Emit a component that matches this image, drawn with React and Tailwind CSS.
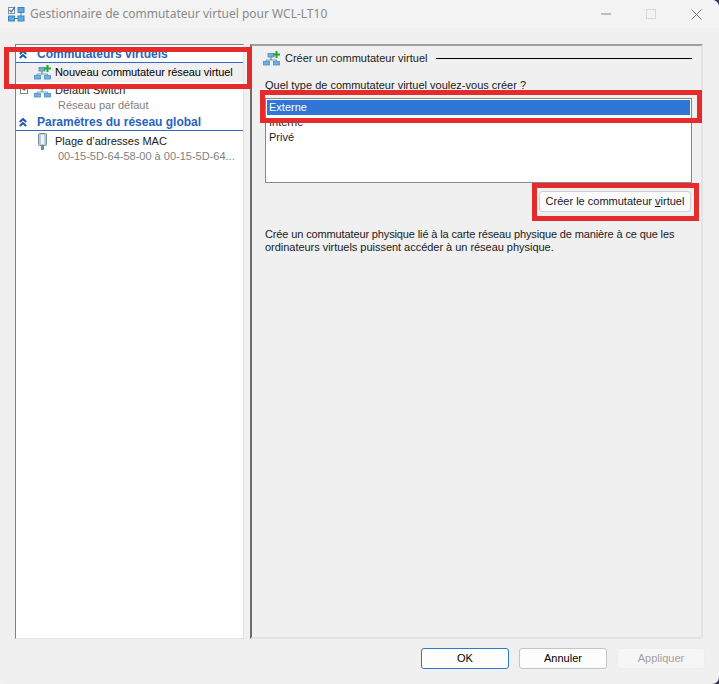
const font = { fontFamily: '"Liberation Sans", Arial, sans-serif' };

function SwitchIcon({ plus = false, className = '' }) {
  return (
    <svg width="17" height="15" viewBox="0 0 17 15" className={`shrink-0 ${className}`}>
      <path d="M8 5v4" fill="none" stroke="#7fb069" strokeWidth="1.5" />
      <path d="M3 10.5V9h10.5v1.5" fill="none" stroke="#6f9fc0" strokeWidth="1" />
      <rect x="5" y="2.5" width="6" height="3.5" fill="#6fb0dc" stroke="#4a90c4" strokeWidth="0.8" />
      <rect x="0.5" y="10.5" width="6" height="3.5" fill="#6fb0dc" stroke="#4a90c4" strokeWidth="0.8" />
      <rect x="10.5" y="10.5" width="6" height="3.5" fill="#6fb0dc" stroke="#4a90c4" strokeWidth="0.8" />
      {plus && <path d="M10 2.5h2.5V0h2v2.5H17v2h-2.5V7h-2V4.500H10z" fill="#22a82c" />}
    </svg>
  );
}

function ChevronUp() {
  return (
    <svg width="8" height="9" viewBox="0 0 8 9" className="shrink-0">
      <path d="M.8 4 4 1l3.200 3M.8 8 4 5l3.200 3" fill="none" stroke="#1c55b0" strokeWidth="2" />
    </svg>
  );
}

function SectionHeader({ children }) {
  return (
    <div className="flex h-[18px] items-center gap-[10px] border-b border-[#2f6bc4] pl-[3px] pt-px">
      <ChevronUp />
      <span className="whitespace-nowrap text-[12px] font-bold text-[#2a63bd]">{children}</span>
    </div>
  );
}

function Highlight({ className }) {
  return <div className={`absolute border-[5px] border-[#e32c2b] ${className}`} />;
}

function FooterButton({ children, variant = 'normal' }) {
  const styles = {
    primary: 'border-[#2f78cf] bg-[#fdfdfd] text-black',
    normal: 'border-[#c4c4c4] bg-[#fdfdfd] text-black',
    disabled: 'border-[#eeeeee] bg-[#f6f6f6] text-[#a0a0a0]',
  };
  return (
    <button className={`h-[21px] w-[88px] rounded-[3px] border text-[11px] leading-none ${styles[variant]}`}>
      {children}
    </button>
  );
}

export default function App() {
  return (
    <div className="h-[684px] w-[719px] bg-gradient-to-r from-[#f4f4f4] from-90% to-[#3a2f55] to-90%">
      <div style={font} className="relative flex h-[684px] w-[719px] flex-col overflow-hidden rounded-[7px] bg-[#f0f0f0] text-[11px] text-[#1a1a1a]">
        <div className="flex h-[28px] shrink-0 items-center bg-[#f3f3f3] pl-2">
          <svg width="17" height="16" viewBox="0 0 17 16" className="shrink-0">
            <rect x="0.5" y="1.500" width="6" height="6" fill="#fff" stroke="#8a8a8a" />
            <path d="M1.500 4 3.200 6 7 .8" fill="none" stroke="#2f78cf" strokeWidth="1.300" />
            <rect x="0.500" y="10" width="6" height="5" fill="#5fa8e0" stroke="#3d85c0" />
            <rect x="10" y="1.500" width="6" height="5" fill="#5fa8e0" stroke="#3d85c0" />
            <rect x="10" y="10" width="6" height="5" fill="#5fa8e0" stroke="#3d85c0" />
            <path d="M13 6.500v3.500M6.500 12.500H10" stroke="#3d85c0" />
          </svg>
          <span className="ml-[5px] whitespace-nowrap font-['Noto_Sans'] text-[12px] text-[#8a8a8a]">Gestionnaire de commutateur virtuel pour WCL-LT10</span>
          <div className="ml-auto flex items-center">
            <svg width="10" height="10" viewBox="0 0 10 10" className="mr-[35px]">
              <path d="M0 5h10" stroke="#888" />
            </svg>
            <svg width="10" height="10" viewBox="0 0 10 10" className="mr-[35px]">
              <rect x="0.5" y="0.5" width="9" height="9" fill="none" stroke="#d8d8d8" />
            </svg>
            <svg width="11" height="11" viewBox="0 0 11 11" className="mr-[17px]">
              <path d="M0.5 0.5l10 10M10.5 0.5l-10 10" stroke="#777" />
            </svg>
          </div>
        </div>

        <div className="flex flex-1 gap-[6px] pl-[15px] pr-[16px] pt-[16px]">
          <div className="flex h-[595px] w-[229px] flex-col border border-[#808080] border-b-[#e3e3e3] border-r-[#e3e3e3] bg-white">
            <SectionHeader>Commutateurs virtuels</SectionHeader>
            <div className="flex h-[19px] items-center bg-[#f0f0f0] pl-[18px]">
              <SwitchIcon plus />
              <span className="ml-[4px] whitespace-nowrap tracking-[-0.08px] text-black">Nouveau commutateur réseau virtuel</span>
            </div>
            <div className="flex h-[16px] items-center pl-[4px]">
              <span className="flex h-[8px] w-[8px] items-center justify-center border border-[#808080] text-[8px] leading-none">+</span>
              <SwitchIcon className="ml-[6px]" />
              <span className="ml-[4px] whitespace-nowrap">Default Switch</span>
            </div>
            <div className="whitespace-nowrap pl-[42px] leading-[15px] text-[#808080]">Réseau par défaut</div>
            <SectionHeader>Paramètres du réseau global</SectionHeader>
            <div className="mt-[2px] flex h-[16px] items-center pl-[22px]">
              <svg width="9" height="17" viewBox="0 0 9 17" className="shrink-0">
                <rect x="0.5" y="0.5" width="8" height="12" rx="1" fill="#b9cbdc" stroke="#7a8a99" />
                <rect x="3" y="2" width="3" height="9" fill="#eef4f9" />
                <path d="M3 13h3v4H3z" fill="#5a93b8" />
              </svg>
              <span className="ml-[8px] whitespace-nowrap">Plage d’adresses MAC</span>
            </div>
            <div className="whitespace-nowrap pl-[42px] leading-[15px] text-[#808080]">00-15-5D-64-58-00 à 00-15-5D-64...</div>
          </div>

          <div className="flex h-[595px] flex-1 flex-col border-2 border-[#a0a0a0] border-b-[#e3e3e3] border-l-[#6d6d6d] border-r-[#e3e3e3] pl-[13px] pr-[9px]">
            <div className="mt-[4px] flex h-[16px] items-center">
              <SwitchIcon plus className="-ml-[2px]" />
              <span className="ml-[5px] whitespace-nowrap">Créer un commutateur virtuel</span>
              <div className="ml-[9px] h-px flex-1 bg-black" />
            </div>
            <div className="mt-[12px] whitespace-nowrap leading-[15px]">Quel type de commutateur virtuel voulez-vous créer ?</div>
            <div className="mt-[5px] h-[85px] border border-[#828790] bg-white p-px">
              <div className="h-[15px] bg-[#3076d6] pl-[2px] leading-[15px] text-white">Externe</div>
              <div className="pl-[2px] leading-[15px]">Interne</div>
              <div className="pl-[2px] leading-[15px]">Privé</div>
            </div>
            <div className="mr-px mt-[8px] flex justify-end">
              <button className="h-[21px] w-[152px] whitespace-nowrap rounded-[3px] border border-[#d0d0d0] bg-[#fbfbfb] text-[11px] leading-none">
                Créer le commutateur <span className="underline">v</span>irtuel
              </button>
            </div>
            <p className="mt-[16px] whitespace-nowrap leading-[13px]">
              <span className="tracking-[-0.13px]">Crée un commutateur physique lié à la carte réseau physique de manière à ce que les</span>
              <br />
              <span className="tracking-[-0.03px]">ordinateurs virtuels puissent accéder à un réseau physique.</span>
            </p>
          </div>
        </div>

        <div className="flex h-[46px] shrink-0 justify-end gap-[10px] pr-[14px] pt-[9px]">
          <FooterButton variant="primary">OK</FooterButton>
          <FooterButton>Annuler</FooterButton>
          <FooterButton variant="disabled">Appliquer</FooterButton>
        </div>

        <Highlight className="left-[4px] top-[47px] h-[42px] w-[248px]" />
        <Highlight className="left-[260px] top-[90px] h-[33px] w-[442px]" />
        <Highlight className="left-[532px] top-[183px] h-[38px] w-[167px]" />
      </div>
    </div>
  );
}
